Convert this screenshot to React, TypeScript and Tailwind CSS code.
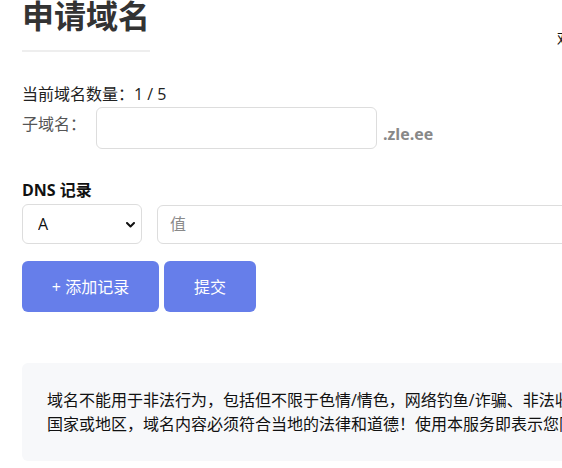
import React from "react";

const font = "font-['Open_Sans','Noto_Sans_CJK_SC',sans-serif]";

function Chevron() {
  return (
    <svg
      width="9"
      height="6"
      viewBox="0 0 9 6"
      className="pointer-events-none absolute right-[7px] top-[18px]"
    >
      <path d="M1 1 L4.5 4.5 L8 1" fill="none" stroke="#111" strokeWidth="2" strokeLinecap="round" strokeLinejoin="round" />
    </svg>
  );
}

export default function App() {
  return (
    <div className={`w-[562px] h-[468px] overflow-hidden bg-white ${font}`}>
      <div className="w-[760px] pl-[22px]">
        {/* page header */}
        <div className="flex items-start w-[595px]">
          <h1 className="-mt-[3px] inline-block border-b-2 border-[#eeeeee] pb-[15px] text-[32px] leading-[38px] font-bold text-[#333333]">
            申请域名
          </h1>
          <div className="ml-auto mt-[27px] text-[15px] leading-[22px] text-[#111111]">欢迎回来</div>
        </div>

        <div className="mt-[30px] text-[16px] leading-[24px] text-[#222222]">当前域名数量：1 / 5</div>

        {/* subdomain row */}
        <div className="mt-[1px] flex items-start">
          <label className="mt-[5px] w-[64px] text-[16px] leading-[24px] text-[#555555]">子域名：</label>
          <input
            type="text"
            className="ml-[10px] h-[42px] w-[281px] rounded-[6px] border border-[#dddddd] px-[12px] text-[16px] outline-none"
          />
          <span className="ml-[6px] mt-[15px] text-[16px] leading-[24px] font-bold text-[#888888]">.zle.ee</span>
        </div>

        <h3 className="mt-[29px] text-[16px] leading-[24px] font-bold text-[#111111]">DNS 记录</h3>

        {/* record row */}
        <div className="mt-[2px] flex items-center">
          <div className="relative">
            <select className="h-[40px] w-[120px] appearance-none rounded-[6px] border border-[#dddddd] bg-white pl-[15px] text-[16px] text-[#111111] outline-none">
              <option>A</option>
              <option>AAAA</option>
              <option>CNAME</option>
              <option>TXT</option>
            </select>
            <Chevron />
          </div>
          <input
            type="text"
            placeholder="值"
            className="ml-[15px] h-[39px] w-[460px] rounded-[6px] border border-[#dddddd] px-[12px] text-[16px] outline-none placeholder:text-[#8a8a8a]"
          />
        </div>

        {/* actions */}
        <div className="mt-[17px] flex gap-[5px]">
          <button className="h-[51px] w-[137px] rounded-[6px] bg-[#667eea] text-[16px] text-white">+ 添加记录</button>
          <button className="h-[51px] w-[92px] rounded-[6px] bg-[#667eea] text-[16px] text-white">提交</button>
        </div>

        {/* notice */}
        <div className="mt-[51px] w-[720px] rounded-[6px] bg-[#f7f8fa] p-[25px] text-[16px] leading-[24px] text-[#111111]">
          <p className="whitespace-nowrap">
            域名不能用于非法行为，包括但不限于色情/情色，网络钓鱼/诈骗、非法收集个人信息等，违反您所在的
            <br />
            国家或地区，域名内容必须符合当地的法律和道德！使用本服务即表示您同意遵守以上规定。
          </p>
        </div>
      </div>
    </div>
  );
}
